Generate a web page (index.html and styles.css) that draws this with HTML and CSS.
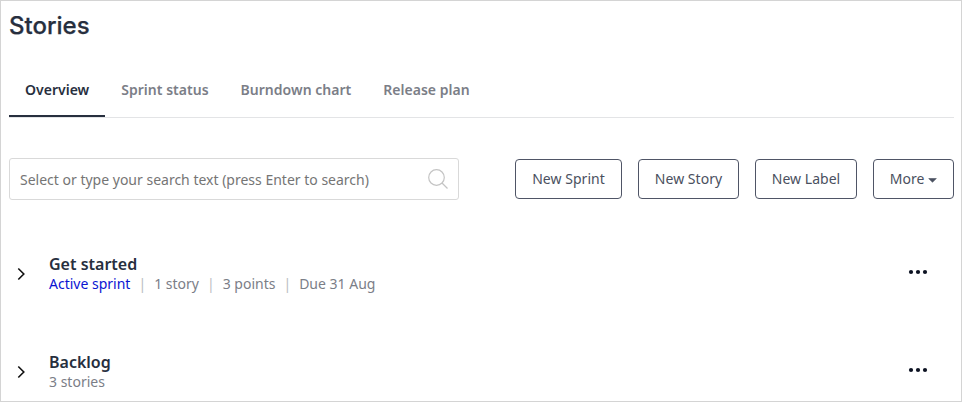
FILE: index.html
```html
<!DOCTYPE html>
<html lang="en">
<head>
<meta charset="utf-8">
<title>Stories</title>
<link rel="stylesheet" href="styles.css">
</head>
<body>
<main class="page">
  <h1 class="title">Stories</h1>
  <nav class="tabs">
    <a class="tab active">Overview</a>
    <a class="tab">Sprint status</a>
    <a class="tab">Burndown chart</a>
    <a class="tab">Release plan</a>
  </nav>
  <div class="toolbar">
    <div class="search">
      <span>Select or type your search text (press Enter to search)</span>
      <svg width="22" height="22" viewBox="0 0 22 22" fill="none" stroke="#c4c4c4" stroke-width="1.2"><circle cx="9.500" cy="9.500" r="7.800"/><path d="M15 15 20.500 20.500"/></svg>
    </div>
    <div class="actions">
      <button class="btn sprint">New Sprint</button>
      <button class="btn story">New Story</button>
      <button class="btn label">New Label</button>
      <button class="btn more">More <svg width="9" height="5" viewBox="0 0 9 5"><path d="M.7 .5h7.600L4.500 4.300z" fill="#4a5060" stroke="#4a5060" stroke-linejoin="round" stroke-width=".6"/></svg></button>
    </div>
  </div>
  <section class="group">
    <svg class="chevron" width="8" height="14" viewBox="0 0 8 14" fill="none" stroke="#111" stroke-width="1.6"><path d="M1.300 1.500 6.800 7 1.300 12.500"/></svg>
    <div class="info">
      <h2>Get started</h2>
      <div class="meta"><span class="status">Active sprint</span><span>1 story</span><span>3 points</span><span>Due 31 Aug</span></div>
    </div>
    <svg class="dots" width="20" height="6" viewBox="0 0 20 6" fill="#0c1222"><circle cx="3" cy="3" r="2.100"/><circle cx="10" cy="3" r="2.100"/><circle cx="17" cy="3" r="2.100"/></svg>
  </section>
  <section class="group">
    <svg class="chevron" width="8" height="14" viewBox="0 0 8 14" fill="none" stroke="#111" stroke-width="1.6"><path d="M1.300 1.500 6.800 7 1.300 12.500"/></svg>
    <div class="info">
      <h2>Backlog</h2>
      <div class="meta"><span>3 stories</span></div>
    </div>
    <svg class="dots" width="20" height="6" viewBox="0 0 20 6" fill="#0c1222"><circle cx="3" cy="3" r="2.100"/><circle cx="10" cy="3" r="2.100"/><circle cx="17" cy="3" r="2.100"/></svg>
  </section>
</main>
</body>
</html>
```
FILE: styles.css
```css
* { box-sizing: border-box; }
body { margin: 0; background: #fff; font-family: "Noto Sans", sans-serif; font-size: 14px; color: #272f3e; }
.page { width: 962px; height: 402px; border: 1px solid #d4d4d4; padding: 8px 7px 0 8px; overflow: hidden; }
.title { margin: 0; height: 52px; font: 500 24px/34px Inter, sans-serif; -webkit-text-stroke: .25px #272f3e; }
.tabs { display: flex; height: 57px; border-bottom: 1px solid #e3e4e6; }
.tab { height: 56px; padding: 0 16px; font-weight: 600; line-height: 58px; letter-spacing: .02px; color: #7b7e87; }
.active { color: #272f3e; border-bottom: 2px solid #272f3e; }
.toolbar { display: flex; justify-content: space-between; margin-top: 40px; height: 42px; align-items: center; }
.search { display: flex; align-items: center; justify-content: space-between; width: 450px; height: 42px; padding: 0 9px 0 10px; border: 1px solid #d9d9d9; border-radius: 3px; color: #757575; }
.actions { display: flex; gap: 16px; }
.btn { height: 40px; padding: 0 0 2px; border: 1px solid #4f5566; border-radius: 4px; background: #fff; font: 400 14px "Noto Sans", sans-serif; letter-spacing: .04px; color: #4a5060; }
.btn svg { vertical-align: 1px; }
.sprint { width: 107px; }
.story { width: 101px; }
.label { width: 102px; }
.more { width: 81px; }
.group { display: flex; height: 98px; padding-top: 54px; }
.chevron { margin: 13px 24px 0 8px; }
.info { flex: 1; }
.group h2 { margin: 0; font-size: 16px; font-weight: 600; line-height: 20px; }
.meta { display: flex; line-height: 20px; color: #7b7e87; }
.meta span + span::before { content: "|"; margin: 0 8px; color: #bbbdc2; }
.status { color: #0a14d2; }
.dots { margin: 15px 26px 0 0; }
```
